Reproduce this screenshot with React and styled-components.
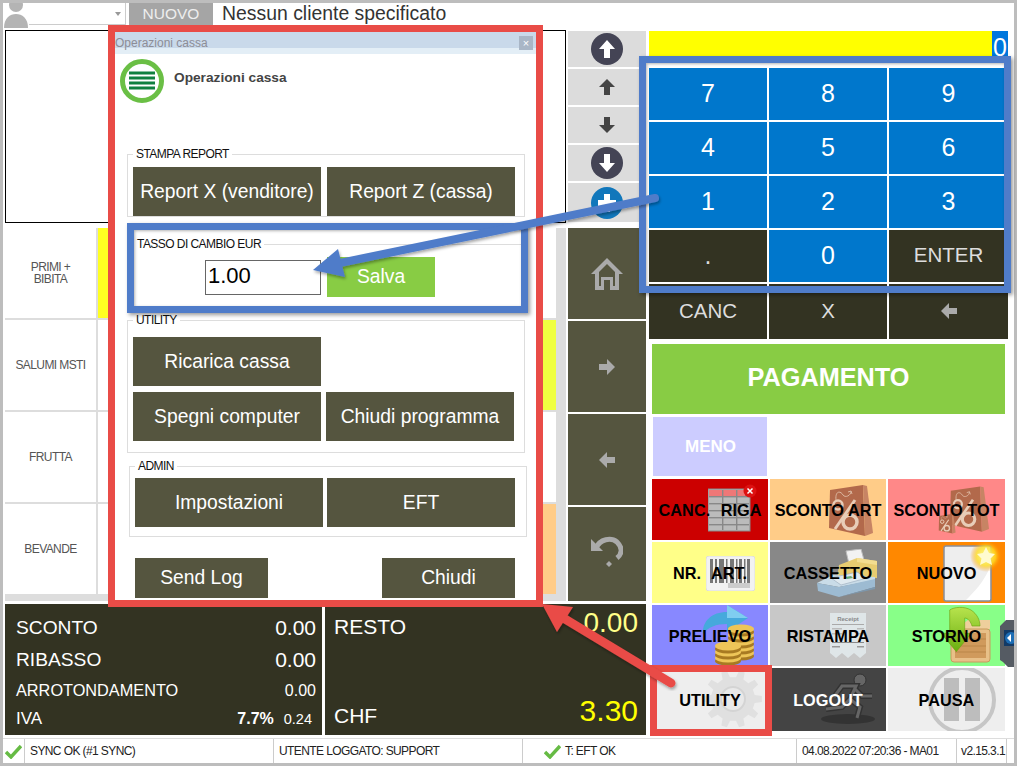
import React from 'react';
import styled, { createGlobalStyle } from 'styled-components';

const GlobalStyle = createGlobalStyle`
html, body { margin: 0; padding: 0; background: #fff; }
body { font-family: "Liberation Sans", Arial, sans-serif; }
* { box-sizing: border-box; }
`;

const Frame = styled.div`
position: relative;
width: 1017px;
height: 766px;
padding: 3px;
overflow: hidden;
background: #fff;
box-shadow: inset 0 0 0 3px #bdbdbd;
`;

/* top bar */
const TopBar = styled.div`
display: flex;
align-items: flex-start;
height: 27px;
`;
const Avatar = styled.div`
width: 25px;
height: 25px;
margin-right: 1px;
`;
const Combo = styled.div`
position: relative;
width: 97px;
height: 22px;
border-right: 1px solid #ccc;
border-bottom: 1px solid #ccc;
&::after {
  content: "";
  position: absolute;
  right: 4px;
  top: 9px;
  border: 3px solid transparent;
  border-top: 4px solid #999;
}
`;
const NewTag = styled.div`
width: 84px;
height: 22px;
margin-left: 3px;
background: #a5a5a5;
color: #eee;
font-size: 15.5px;
line-height: 22px;
text-align: center;
`;
const Customer = styled.div`
margin-left: 9px;
font-size: 19.4px;
line-height: 20px;
color: #333;
`;

/* page columns */
const Content = styled.div`
display: flex;
height: 705px;
padding-left: 2px;
`;
const Main = styled.div`
width: 644px;
`;
const Upper = styled.div`
display: flex;
height: 574px;
`;
const LeftCol = styled.div`
width: 561px;
`;
const Receipt = styled.div`
height: 193px;
margin-bottom: 5px;
border: 1px solid #000;
background: #fff;
`;
const Products = styled.div`
display: grid;
grid-template-columns: 91px repeat(5, 1fr);
grid-auto-rows: 90px;
gap: 2px;
height: 373px;
padding-right: 10px;
background: #ddd;
`;
const Product = styled.div`
display: flex;
align-items: center;
justify-content: center;
padding-bottom: 1px;
background: ${(p) => p.$bg || '#fff'};
color: #555;
font-size: 12px;
letter-spacing: -0.6px;
line-height: 12px;
text-align: center;
white-space: pre-line;
`;

/* navigation column */
const NavCol = styled.div`
display: flex;
flex-direction: column;
gap: 2px;
width: 78px;
margin-left: 2px;
padding-top: 1px;
`;
const NavSmall = styled.div`
display: flex;
align-items: center;
justify-content: center;
height: ${(p) => p.$h}px;
background: #dcdcdc;
`;
const NavBig = styled.div`
display: flex;
align-items: center;
justify-content: center;
height: ${(p) => p.$h}px;
margin-top: ${(p) => p.$top || 0}px;
padding-bottom: ${(p) => p.$lift || 0}px;
background: #55553f;
`;

/* totals */
const Totals = styled.div`
display: flex;
gap: 3px;
height: 131px;
`;
const TotalsLeft = styled.div`
width: 317px;
padding: 8px 6px 0 11px;
background: #333322;
color: #fff;
`;
const TotalRow = styled.div`
display: flex;
align-items: center;
justify-content: space-between;
height: ${(p) => p.$h}px;
font-size: ${(p) => p.$size}px;
`;
const TotalValue = styled.span`
font-size: ${(p) => p.$size}px;
`;
const TaxValues = styled.span`
display: flex;
align-items: center;
gap: 10px;
padding-right: 4px;
`;
const TaxRate = styled.b`
font-size: 16px;
`;
const TotalsRight = styled.div`
display: flex;
flex-direction: column;
justify-content: space-between;
width: 321px;
padding: 0 8px 0 9px;
background: #333322;
color: #fff;
`;
const ChangeRow = styled.div`
display: flex;
align-items: center;
justify-content: space-between;
height: 40px;
`;
const ChangeLabel = styled.span`
margin-top: ${(p) => p.$drop}px;
font-size: 21px;
`;
const Amount = styled.span`
margin-bottom: ${(p) => p.$lift}px;
color: ${(p) => p.$color};
font-size: ${(p) => p.$size}px;
`;

/* right column */
const RightCol = styled.div`
width: 359px;
padding-top: 1px;
`;
const Display = styled.div`
display: flex;
justify-content: flex-end;
height: 32px;
margin-bottom: 5px;
background: #ffff00;
`;
const DisplayValue = styled.div`
width: 16px;
background: #0077dd;
color: #fff;
font-size: 25px;
line-height: 32px;
text-align: center;
`;
const Keypad = styled.div`
display: grid;
grid-template-columns: 118px 118px 119px;
grid-template-rows: repeat(4, 52px) 55px;
gap: 2px;
`;
const Key = styled.div`
display: flex;
align-items: center;
justify-content: center;
padding-bottom: 2px;
background: ${(p) => (p.$dark ? '#333322' : '#0077cc')};
color: ${(p) => (p.$dark ? '#ddd' : '#fff')};
font-size: ${(p) => p.$size || 25}px;
`;
const PayButton = styled.div`
display: flex;
align-items: center;
justify-content: center;
width: 353px;
height: 70px;
margin: 5px 0 0 3px;
padding-bottom: 3px;
background: #88cc44;
color: #fff;
font-size: 25.3px;
font-weight: bold;
`;
const LessButton = styled.div`
display: flex;
align-items: center;
justify-content: center;
width: 114px;
height: 59px;
margin: 3px 0 0 4px;
padding-left: 1px;
background: #ccccff;
color: #fff;
font-size: 17px;
font-weight: bold;
`;
const FnGrid = styled.div`
display: grid;
grid-template-columns: 116px 116px 117px;
grid-template-rows: 61px 61px 61px 63px;
gap: 2px;
margin: 3px 0 0 3px;
`;
const FnButton = styled.div`
position: relative;
display: flex;
align-items: center;
justify-content: center;
padding-top: 1px;
overflow: hidden;
background: ${(p) => p.$bg};
color: ${(p) => p.$color || '#000'};
font-size: 16.3px;
font-weight: bold;
white-space: nowrap;
word-spacing: ${(p) => p.$wordGap || 0}px;
`;
const FnLabel = styled.span`
position: relative;
z-index: 1;
`;
const FnIcon = styled.svg`
position: absolute;
left: ${(p) => p.$x}px;
top: ${(p) => p.$y}px;
`;

/* status bar */
const StatusBar = styled.div`
display: flex;
height: 25px;
margin-top: 3px;
border-top: 1px solid #ddd;
font-size: 12px;
letter-spacing: -0.6px;
color: #222;
`;
const StatusCell = styled.div`
display: flex;
align-items: center;
gap: 4px;
width: ${(p) => p.$w}px;
padding-left: ${(p) => p.$pad || 0}px;
border-right: 1px solid #ccc;
`;

/* dialog */
const Dialog = styled.div`
position: absolute;
left: 115px;
top: 32px;
width: 421px;
height: 568px;
overflow: hidden;
background: #fff;
`;
const TitleBar = styled.div`
display: flex;
align-items: center;
justify-content: space-between;
height: 22px;
padding: 0 3px 0 0;
background: linear-gradient(#c9d9ea 0, #c9d9ea 16px, #e3eef6 16px);
color: #8d8d96;
font-size: 12px;
`;
const CloseBox = styled.div`
display: flex;
align-items: center;
justify-content: center;
width: 14px;
height: 14px;
background: #a9b6c6;
color: #fff;
font-size: 11px;
line-height: 14px;
`;
const DialogHead = styled.div`
display: flex;
align-items: flex-start;
gap: 10px;
height: 93px;
padding: 5px 0 0 5px;
`;
const DialogTitle = styled.div`
margin-top: 11px;
color: #444;
font-size: 13.7px;
font-weight: bold;
`;
const Group = styled.fieldset`
width: ${(p) => p.$w || 398}px;
margin: ${(p) => p.$top || 0}px 0 0 ${(p) => p.$left || 12}px;
padding: ${(p) => p.$pad || 6}px 5px ${(p) => p.$bottom || 0}px;
border: 1px solid #ddd;
`;
const GroupTitle = styled.legend`
margin-left: ${(p) => p.$left || 0}px;
padding: 0 3px;
color: #111;
font-size: 12px;
line-height: 14px;
letter-spacing: -0.55px;
`;
const ButtonRow = styled.div`
display: flex;
gap: ${(p) => p.$gap || 6}px;
margin-top: ${(p) => p.$top || 0}px;
padding-left: ${(p) => p.$pad || 0}px;
align-items: center;
`;
const DlgButton = styled.div`
display: flex;
align-items: center;
justify-content: center;
width: ${(p) => p.$w || 188}px;
height: ${(p) => p.$h || 49}px;
background: ${(p) => p.$bg || '#55553f'};
color: #fff;
font-size: 19.3px;
`;
const RateInput = styled.div`
width: 116px;
height: 35px;
padding-left: 2px;
border: 1px solid #666;
color: #000;
font-size: 22px;
line-height: 30px;
`;
const DialogFoot = styled.div`
display: flex;
justify-content: space-between;
width: 380px;
margin: 21px 0 0 20px;
`;

/* annotations on top of the screenshot */
const MarkBox = styled.div`
position: absolute;
left: ${(p) => p.$x}px;
top: ${(p) => p.$y}px;
width: ${(p) => p.$w}px;
height: ${(p) => p.$h}px;
border: ${(p) => p.$b}px solid ${(p) => p.$color};
box-shadow: ${(p) => (p.$shadow ? '2px 2px 4px rgba(0,0,0,.4), inset 1px 1px 3px rgba(0,0,0,.3)' : 'none')};
pointer-events: none;
`;
const ArrowLayer = styled.svg`
position: absolute;
left: 0;
top: 0;
pointer-events: none;
`;
const SideTab = styled.svg`
position: absolute;
left: 1000px;
top: 620px;
`;

const CheckIcon = () => (
  <svg width="17" height="15" viewBox="0 0 17 15">
    <path d="M1 8 L6 13 L16 2" fill="none" stroke="#66bb44" strokeWidth="3.4" />
  </svg>
);

const AvatarIcon = () => (
  <svg width="25" height="25" viewBox="0 0 25 25">
    <circle cx="13" cy="2" r="7" fill="#b4b4b4" />
    <path d="M1 25 C1 15 7 11 13 11 C19 11 25 15 25 25 Z" fill="#b4b4b4" />
  </svg>
);

const CircleArrow = ({ down, bg = '#444455' }) => (
  <svg width="32" height="32" viewBox="0 0 32 32">
    <circle cx="16" cy="16" r="16" fill={bg} />
    <path
      d={down ? 'M13 7 H19 V16 H24 L16 25 L8 16 H13 Z' : 'M13 25 H19 V16 H24 L16 7 L8 16 H13 Z'}
      fill="#fff"
    />
  </svg>
);

const PlusCircle = () => (
  <svg width="32" height="32" viewBox="0 0 32 32">
    <circle cx="16" cy="16" r="16" fill="#1177bb" />
    <path d="M13 7 H19 V13 H25 V19 H19 V25 H13 V19 H7 V13 H13 Z" fill="#fff" />
  </svg>
);

const SmallArrow = ({ dir, color = '#444' }) => {
  const rot = { up: 0, right: 90, down: 180, left: 270 }[dir];
  return (
    <svg width="16" height="16" viewBox="0 0 16 16">
      <path d="M5 16 H11 V8 H16 L8 0 L0 8 H5 Z" fill={color} transform={`rotate(${rot} 8 8)`} />
    </svg>
  );
};

const HomeIcon = () => (
  <svg width="32" height="32" viewBox="0 0 32 32">
    <path
      d="M16 0 L32 16 L28 16 V32 H19 V22 H13 V32 H4 V16 L0 16 Z M16 6 L8 14 V28 H10 V19 H22 V28 H24 V14 Z"
      fill="#aaa"
      fillRule="evenodd"
    />
  </svg>
);

const UndoIcon = () => (
  <svg width="32" height="32" viewBox="0 0 32 32">
    <path d="M5 13 C9 4 20 2 26 7 C32 13 31 19 26 23" fill="none" stroke="#aaa" strokeWidth="5" />
    <path d="M0 4 V16 H12 Z" fill="#aaa" />
    <path d="M18 26 L21 29 L18 32 L15 29 Z" fill="#aaa" />
  </svg>
);

const TableIcon = () => (
  <FnIcon $x={56} $y={5} width="55" height="50" viewBox="0 0 55 50">
    <rect x="0" y="5" width="42" height="42" fill="#bbb" stroke="#888" />
    <rect x="1" y="6" width="40" height="6" fill="#ee7777" />
    {[12, 19, 26, 33, 40].map((y) => (
      <rect key={y} x="1" y={y} width="40" height="1.4" fill="#888" />
    ))}
    {[14, 28].map((x) => (
      <rect key={x} x={x} y="6" width="1.4" height="40" fill="#888" />
    ))}
    <circle cx="42" cy="7" r="6.5" fill="#dd1111" />
    <path d="M39.5 4.5 L44.5 9.5 M44.5 4.5 L39.5 9.5" stroke="#fff" strokeWidth="1.5" />
  </FnIcon>
);

const BagIcon = ({ x, y, w = 45, h = 52 }) => (
  <FnIcon $x={x} $y={y} width={w} height={h} viewBox="0 0 45 52">
    <path d="M2 5 L35 0 L37 51 L1 43 Z" fill="#b2694b" />
    <path d="M35 0 L39 1 L45 48 L37 51 Z" fill="#c78464" />
    <path d="M8 15 C7 5 13 6 15 10 C17 13 23 11 23 6 M23 6 L20 7 M23 6 L24 9" fill="none" stroke="#dcb7a0" strokeWidth="1" />
    <circle cx="10" cy="20" r="4.5" fill="none" stroke="#e8cdb8" strokeWidth="2.5" />
    <circle cx="22" cy="37" r="7" fill="none" stroke="#e8cdb8" strokeWidth="3.5" />
    <path d="M27 15 L7 44" stroke="#e8cdb8" strokeWidth="3" />
  </FnIcon>
);

const BarcodeIcon = () => {
  const bars = [[4, 3], [9, 2], [13, 5], [20, 1.5], [24, 4], [30, 1.5], [33, 3], [38, 1.5], [41, 3]];
  return (
    <FnIcon $x={54} $y={14} width="49" height="35" viewBox="0 0 49 35">
      <rect width="49" height="35" rx="3" fill="#f2f2f2" stroke="#ddd" />
      {bars.map(([x, w]) => (
        <rect key={x} x={x} y="3" width={w} height="24" fill="#777" />
      ))}
      <rect x="22" y="27" width="22" height="5" fill="#ccc" />
    </FnIcon>
  );
};

const RegisterIcon = () => (
  <FnIcon $x={47} $y={7} width="60" height="48" viewBox="0 0 60 48">
    <path d="M29 2 L44 0 L47 11 L32 15 Z" fill="#f2f2f2" stroke="#bbb" />
    <path d="M22 16 L40 9 L60 12 L60 29 L20 31 Z" fill="#e8cc70" />
    <path d="M40 9 L60 12 L60 16 L40 13 Z" fill="#f3dd90" />
    <path d="M0 34 L16 26 L58 28 L58 31 L22 38 Z" fill="#c9dce8" />
    <path d="M14 29 L40 23 L50 29 L24 36 Z" fill="#dfeaf0" stroke="#9ab" strokeWidth="0.6" />
    <path d="M28 28 L34 27 L36 29 L30 30 Z" fill="#66aa77" />
    <path d="M0 34 L22 38 L58 30 L58 38 L22 48 L1 42 Z" fill="#9dbbd2" />
    <path d="M1 42 L22 48 L58 38 L58 40 L22 48 Z" fill="#7d98ae" />
  </FnIcon>
);

const PageIcon = () => (
  <FnIcon $x={48} $y={0} width="68" height="61" viewBox="0 0 68 61">
    <defs>
      <radialGradient id="glow">
        <stop offset="0" stopColor="#ffff99" />
        <stop offset="0.6" stopColor="#ffdd22" stopOpacity="0.8" />
        <stop offset="1" stopColor="#ff8800" stopOpacity="0" />
      </radialGradient>
    </defs>
    <rect x="8" y="4" width="47" height="55" rx="2" fill="#eee" stroke="#8a8f99" strokeWidth="1.5" />
    <path d="M30 58 L54 58 L54 25 C48 40 38 50 30 58 Z" fill="#fff" />
    <circle cx="50" cy="14" r="16" fill="url(#glow)" />
    <path d="M50 5 L53 11 L59 12 L54.5 16.5 L56 23 L50 20 L44 23 L45.5 16.5 L41 12 L47 11 Z" fill="#fffbd0" />
  </FnIcon>
);

const CoinStack = ({ x, top, count }) => (
  <>
    {Array.from({ length: count }).map((_, i) => {
      const y = top + (count - 1 - i) * 6;
      return (
        <g key={i}>
          <ellipse cx={x} cy={y + 3} rx="13" ry="4.5" fill="#a87a22" />
          <ellipse cx={x} cy={y} rx="13" ry="4.5" fill="#eec558" />
        </g>
      );
    })}
  </>
);

const WithdrawIcon = () => (
  <FnIcon $x={50} $y={0} width="56" height="61" viewBox="0 0 56 61">
    <path d="M1 29 C0 16 10 7 25 7 V0 L46 13 L25 27 V19 C14 19 6 22 1 29 Z" fill="#46a9dc" />
    <path d="M25 7 V0 L46 13 H25 Z" fill="#7fcdf0" />
    <CoinStack x={39} top={24} count={5} />
    <CoinStack x={26} top={41} count={3} />
  </FnIcon>
);

const ReceiptIcon = () => (
  <FnIcon $x={60} $y={8} width="36" height="46" viewBox="0 0 36 46">
    <path d="M0 0 H36 V40 L30 45 L24 40 L18 45 L12 40 L6 45 L0 40 Z" fill="#dfe6e8" />
    <text x="18" y="8" fontSize="6" fill="#888" textAnchor="middle" fontFamily="Liberation Sans">Receipt</text>
    <rect x="2" y="11" width="32" height="1" fill="#aaa" />
    <rect x="2" y="15" width="10" height="1.5" fill="#bbb" />
    <rect x="27" y="15" width="7" height="1.5" fill="#bbb" />
    <rect x="2" y="20" width="10" height="1.5" fill="#bbb" />
    <rect x="27" y="20" width="7" height="1.5" fill="#bbb" />
    <rect x="2" y="29" width="32" height="1" fill="#888" />
    <rect x="2" y="33" width="8" height="1.5" fill="#999" />
    <rect x="27" y="33" width="7" height="1.5" fill="#999" />
  </FnIcon>
);

const CrateIcon = () => (
  <FnIcon $x={50} $y={0} width="56" height="61" viewBox="0 0 56 61">
    <defs>
      <linearGradient id="green" x1="0" y1="0" x2="0" y2="1">
        <stop offset="0" stopColor="#b7e34d" />
        <stop offset="1" stopColor="#6aae10" />
      </linearGradient>
    </defs>
    <path d="M18 24 L30 15 L52 15 L52 24 Z" fill="#eecf9c" />
    <rect x="13" y="24" width="39" height="33" rx="3" fill="#e8c088" stroke="#c89a5c" />
    <rect x="17" y="28" width="31" height="25" fill="#d09a5c" />
    <path d="M17 34 H48 M17 41 H48 M17 47 H48" stroke="#b98548" strokeWidth="1.2" />
    <path
      d="M11.7 5 C16 2 26 1 33 5 C39 9 42 15 42 21 L34 21 C33 17 30 13 26.7 13 L26.7 28.3 L33.3 28.3 L18.3 46.7 L3.3 28.3 L11.7 28.3 Z"
      fill="url(#green)"
      stroke="#6aa010"
      strokeWidth="0.6"
    />
  </FnIcon>
);

const gearPath = () => {
  const pts = [];
  const teeth = 10;
  for (let i = 0; i < teeth; i++) {
    const a = (i / teeth) * Math.PI * 2;
    const step = (Math.PI * 2) / teeth;
    [[a - step * 0.28, 22], [a - step * 0.16, 29], [a + step * 0.16, 29], [a + step * 0.28, 22]].forEach(([t, r]) => {
      pts.push(`${(29 + Math.cos(t) * r).toFixed(1)} ${(29 + Math.sin(t) * r).toFixed(1)}`);
    });
  }
  return `M${pts.join(' L')} Z`;
};

const GearIcon = () => (
  <FnIcon $x={52} $y={2} width="58" height="58" viewBox="0 0 58 58">
    <path d={gearPath()} fill="#e0e0e0" />
    <circle cx="29" cy="29" r="12" fill="#e9e9e9" stroke="#d4d4d4" strokeWidth="2" />
  </FnIcon>
);

const RunnerIcon = () => (
  <FnIcon $x={50} $y={5} width="56" height="52" viewBox="0 0 56 52">
    <ellipse cx="28" cy="46" rx="27" ry="5" fill="#333" />
    <circle cx="40" cy="7" r="6" fill="#666" stroke="#333" strokeWidth="1" />
    <path d="M14 24 L22 13 H36 L30 26 L40 34 L37 45 M30 26 L22 34 L6 36 M35 16 L42 23 H52" fill="none" stroke="#333" strokeWidth="6" />
    <path d="M14 24 L22 13 H36 L30 26 L40 34 L37 45 M30 26 L22 34 L6 36 M35 16 L42 23 H52" fill="none" stroke="#666" strokeWidth="3" />
  </FnIcon>
);

const PauseIcon = () => (
  <FnIcon $x={39} $y={-2} width="70" height="70" viewBox="0 0 70 70">
    <circle cx="35" cy="34" r="32" fill="none" stroke="#c6c6c6" strokeWidth="4" />
    <rect x="17" y="12" width="15" height="43" fill="#bdbdbd" />
    <rect x="38" y="12" width="15" height="43" fill="#bdbdbd" />
  </FnIcon>
);

const products = [
  ['PRIMI +\nBIBITA'], ['', '#ffff22'], [''], [''], [''], [''],
  ['SALUMI MSTI'], [''], [''], [''], [''], ['', '#f0ff40'],
  ['FRUTTA'], [''], [''], [''], [''], [''],
  ['BEVANDE'], [''], [''], [''], [''], ['', '#ffcc88'],
];

const App = () => {
  return (
    <Frame>
      <GlobalStyle />
      <TopBar>
        <Avatar><AvatarIcon /></Avatar>
        <Combo />
        <NewTag>NUOVO</NewTag>
        <Customer>Nessun cliente specificato</Customer>
      </TopBar>

      <Content>
        <Main>
          <Upper>
            <LeftCol>
              <Receipt />
              <Products>
                {products.map(([label, bg], i) => (
                  <Product key={i} $bg={bg}>{label}</Product>
                ))}
              </Products>
            </LeftCol>
            <NavCol>
              <NavSmall $h={36}><CircleArrow /></NavSmall>
              <NavSmall $h={36}><SmallArrow dir="up" /></NavSmall>
              <NavSmall $h={36}><SmallArrow dir="down" /></NavSmall>
              <NavSmall $h={36}><CircleArrow down /></NavSmall>
              <NavSmall $h={39}><PlusCircle /></NavSmall>
              <NavBig $h={91} $top={4}><HomeIcon /></NavBig>
              <NavBig $h={91}><SmallArrow dir="right" color="#aaa" /></NavBig>
              <NavBig $h={91}><SmallArrow dir="left" color="#aaa" /></NavBig>
              <NavBig $h={94} $lift={6}><UndoIcon /></NavBig>
            </NavCol>
          </Upper>
          <Totals>
            <TotalsLeft>
              <TotalRow $h={32} $size={19.2}>SCONTO<TotalValue $size={21}>0.00</TotalValue></TotalRow>
              <TotalRow $h={32} $size={19.2}>RIBASSO<TotalValue $size={21}>0.00</TotalValue></TotalRow>
              <TotalRow $h={29} $size={16.3}>ARROTONDAMENTO<TotalValue $size={16}>0.00</TotalValue></TotalRow>
              <TotalRow $h={28} $size={17}>
                IVA
                <TaxValues>
                  <TaxRate>7.7%</TaxRate>
                  <TotalValue $size={14.5}>0.24</TotalValue>
                </TaxValues>
              </TotalRow>
            </TotalsLeft>
            <TotalsRight>
              <ChangeRow>
                <ChangeLabel $drop={6}>RESTO</ChangeLabel>
                <Amount $color="#ffff88" $size={28} $lift={2}>0.00</Amount>
              </ChangeRow>
              <ChangeRow>
                <ChangeLabel $drop={2}>CHF</ChangeLabel>
                <Amount $color="#ffff00" $size={30} $lift={8}>3.30</Amount>
              </ChangeRow>
            </TotalsRight>
          </Totals>
        </Main>

        <RightCol>
          <Display><DisplayValue>0</DisplayValue></Display>
          <Keypad>
            {['7', '8', '9', '4', '5', '6', '1', '2', '3'].map((n) => <Key key={n}>{n}</Key>)}
            <Key $dark>.</Key>
            <Key>0</Key>
            <Key $dark $size={20.5}>ENTER</Key>
            <Key $dark $size={20.5}>CANC</Key>
            <Key $dark $size={20.5}>X</Key>
            <Key $dark><SmallArrow dir="left" color="#aaa" /></Key>
          </Keypad>
          <PayButton>PAGAMENTO</PayButton>
          <LessButton>MENO</LessButton>
          <FnGrid>
            <FnButton $bg="#cc0000" $wordGap={6}><TableIcon /><FnLabel>CANC. RIGA</FnLabel></FnButton>
            <FnButton $bg="#ffcc88"><BagIcon x={58} y={6} /><FnLabel>SCONTO ART</FnLabel></FnButton>
            <FnButton $bg="#ff8888">
              <BagIcon x={61} y={7} w={40} h={47} />
              <BagIcon x={50} y={35} w={18} h={20} />
              <FnLabel>SCONTO TOT</FnLabel>
            </FnButton>
            <FnButton $bg="#ffff88" $wordGap={6}><BarcodeIcon /><FnLabel>NR. ART.</FnLabel></FnButton>
            <FnButton $bg="#888888"><RegisterIcon /><FnLabel>CASSETTO</FnLabel></FnButton>
            <FnButton $bg="#ff8800"><PageIcon /><FnLabel>NUOVO</FnLabel></FnButton>
            <FnButton $bg="#8888ff"><WithdrawIcon /><FnLabel>PRELIEVO</FnLabel></FnButton>
            <FnButton $bg="#c8c8c8"><ReceiptIcon /><FnLabel>RISTAMPA</FnLabel></FnButton>
            <FnButton $bg="#88ff88"><CrateIcon /><FnLabel>STORNO</FnLabel></FnButton>
            <FnButton $bg="#eeeeee"><GearIcon /><FnLabel>UTILITY</FnLabel></FnButton>
            <FnButton $bg="#444444" $color="#fff"><RunnerIcon /><FnLabel>LOGOUT</FnLabel></FnButton>
            <FnButton $bg="#eeeeee"><PauseIcon /><FnLabel>PAUSA</FnLabel></FnButton>
          </FnGrid>
        </RightCol>
      </Content>

      <StatusBar>
        <StatusCell $w={22} $pad={2}><CheckIcon /></StatusCell>
        <StatusCell $w={249} $pad={5}>SYNC OK (#1 SYNC)</StatusCell>
        <StatusCell $w={249} $pad={5}>UTENTE LOGGATO: SUPPORT</StatusCell>
        <StatusCell $w={274} $pad={21}><CheckIcon />T: EFT OK</StatusCell>
        <StatusCell $w={160} $pad={5}>04.08.2022 07:20:36 - MA01</StatusCell>
        <StatusCell $w={50} $pad={4}>v2.15.3.1</StatusCell>
      </StatusBar>

      <Dialog>
        <TitleBar>
          Operazioni cassa
          <CloseBox>×</CloseBox>
        </TitleBar>
        <DialogHead>
          <svg width="44" height="44" viewBox="0 0 44 44">
            <circle cx="22" cy="22" r="19.5" fill="#fff" stroke="#6abf45" strokeWidth="5" />
            {[14, 19, 24, 29].map((y) => (
              <rect key={y} x="9" y={y - 1.5} width="26" height="3" fill="#108040" />
            ))}
          </svg>
          <DialogTitle>Operazioni cassa</DialogTitle>
        </DialogHead>

        <Group>
          <GroupTitle>STAMPA REPORT</GroupTitle>
          <ButtonRow>
            <DlgButton>Report X (venditore)</DlgButton>
            <DlgButton>Report Z (cassa)</DlgButton>
          </ButtonRow>
        </Group>
        <Group $top={20} $bottom={10}>
          <GroupTitle $left={1}>TASSO DI CAMBIO EUR</GroupTitle>
          <ButtonRow $pad={72}>
            <RateInput>1.00</RateInput>
            <DlgButton $w={108} $h={40} $bg="#88cc44">Salva</DlgButton>
          </ButtonRow>
        </Group>
        <Group $top={5} $pad={10} $bottom={11}>
          <GroupTitle>UTILITY</GroupTitle>
          <ButtonRow><DlgButton>Ricarica cassa</DlgButton></ButtonRow>
          <ButtonRow $top={6} $gap={5}>
            <DlgButton>Spegni computer</DlgButton>
            <DlgButton>Chiudi programma</DlgButton>
          </ButtonRow>
        </Group>
        <Group $top={6} $left={14} $pad={5} $bottom={9}>
          <GroupTitle>ADMIN</GroupTitle>
          <ButtonRow $gap={4}>
            <DlgButton>Impostazioni</DlgButton>
            <DlgButton>EFT</DlgButton>
          </ButtonRow>
        </Group>
        <DialogFoot>
          <DlgButton $w={133} $h={40}>Send Log</DlgButton>
          <DlgButton $w={133} $h={40}>Chiudi</DlgButton>
        </DialogFoot>
      </Dialog>

      <SideTab width="14" height="47" viewBox="0 0 14 47">
        <path d="M6 0 H14 V47 H8 L3 42 L0 40 V6 Z" fill="#555b63" />
        <rect x="4" y="10" width="10" height="16" fill="#123a66" />
        <circle cx="11" cy="18" r="6" fill="#1c6db5" />
        <path d="M7 18 L11 14 V22 Z" fill="#fff" />
      </SideTab>

      <MarkBox $x={108} $y={25} $w={435} $h={582} $b={7} $color="#e94c47" />
      <MarkBox $x={127} $y={223} $w={401} $h={90} $b={7} $color="#4f7cc9" $shadow />
      <MarkBox $x={639} $y={56} $w={372} $h={237} $b={7} $color="#4f7cc9" $shadow />
      <MarkBox $x={650} $y={665} $w={122} $h={71} $b={7} $color="#e94c47" />

      <ArrowLayer width="1017" height="766" viewBox="0 0 1017 766">
        <defs>
          <filter id="soft" x="-10%" y="-10%" width="120%" height="120%">
            <feDropShadow dx="1" dy="2" stdDeviation="1.5" floodOpacity="0.35" />
          </filter>
        </defs>
        <g filter="url(#soft)">
          <path d="M655 198 L340 263" stroke="#4f7cc9" strokeWidth="8" strokeLinecap="round" />
          <path d="M313 270 L338 249 L345 277 Z" fill="#4f7cc9" />
        </g>
        <g filter="url(#soft)">
          <path d="M671 683 L565 619" stroke="#e94c47" strokeWidth="9" strokeLinecap="round" />
          <path d="M542 604 L573 607 L557 632 Z" fill="#e94c47" />
        </g>
      </ArrowLayer>
    </Frame>
  );
};

export default App;
